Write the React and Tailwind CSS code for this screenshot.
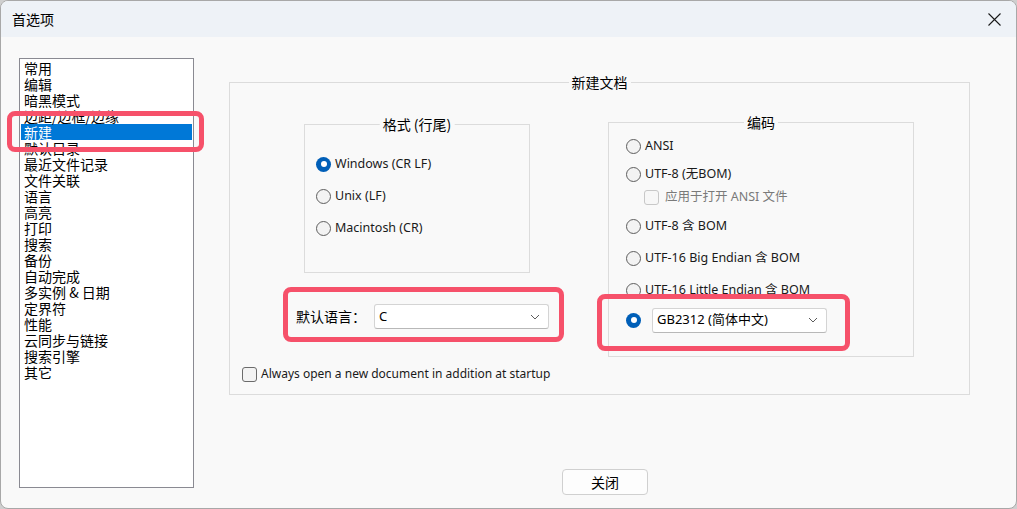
import React from 'react';

const cjk = { fontFamily: '"Noto Sans CJK SC", "Noto Sans", sans-serif' };
const ui = { fontFamily: '"Noto Sans", "Noto Sans CJK SC", sans-serif' };

const pages = [
  '常用', '编辑', '暗黑模式', '边距/边框/边缘', '新建', '默认目录', '最近文件记录', '文件关联', '语言', '高亮',
  '打印', '搜索', '备份', '自动完成', '多实例 & 日期', '定界符', '性能', '云同步与链接', '搜索引擎', '其它',
];

const Radio = ({ checked }) =>
  checked ? (
    <div className="w-[15px] h-[15px] rounded-full bg-[#005fb8] flex items-center justify-center shrink-0">
      <div className="w-[6px] h-[6px] rounded-full bg-white" />
    </div>
  ) : (
    <div className="w-[15px] h-[15px] rounded-full border border-[#5e5e5e] bg-[#f3f3f3] shrink-0" />
  );

const Check = ({ disabled }) => (
  <div
    className={`w-[15px] h-[15px] rounded-[3px] border shrink-0 ${
      disabled ? 'border-[#c8c8c8] bg-[#f7f7f7]' : 'border-[#6b6b6b] bg-[#f3f3f3]'
    }`}
  />
);

const Chevron = () => (
  <svg width="10" height="6" viewBox="0 0 10 6" className="shrink-0">
    <path d="M1 1 L5 5 L9 1" fill="none" stroke="#5c5c5c" strokeWidth="1" />
  </svg>
);

const Select = ({ value }) => (
  <div className="w-[175px] h-[25px] bg-white border border-[#d4d4d4] border-b-[#b8b8b8] rounded-[3px] flex items-center justify-between pl-[4px] pr-[8px] text-[13px] text-black" style={ui}>
    <span>{value}</span>
    <Chevron />
  </div>
);

const Row = ({ className = 'text-[12.5px]', children }) => (
  <div className={`h-[20px] flex items-center gap-[4px] text-[#1a1a1a] ${className}`} style={ui}>
    {children}
  </div>
);

const Group = ({ title, className = '', children }) => (
  <div className={`relative border border-[#dcdcdc] ${className}`}>
    <span className="absolute left-1/2 -translate-x-1/2 -top-[11px] bg-[#f9f9f9] px-[3px] text-[14px] leading-[20px] text-black whitespace-nowrap" style={cjk}>
      {title}
    </span>
    {children}
  </div>
);

export default function App() {
  return (
    <div className="relative w-[1017px] h-[509px] bg-[#cfcfcf] overflow-hidden">
      <div className="w-full h-full flex flex-col bg-[#f9f9f9] border border-[#a8a8a8] rounded-[8px] overflow-hidden">
        {/* title bar */}
        <div className="h-[36px] bg-[#eef2f7] flex items-center justify-between pl-[11px] pr-[15px] shrink-0">
          <span className="text-[14px] text-black" style={cjk}>首选项</span>
          <svg width="13" height="13" viewBox="0 0 13 13">
            <path d="M0.5 0.5 L12.5 12.5 M12.5 0.5 L0.5 12.5" stroke="#1a1a1a" strokeWidth="1.1" />
          </svg>
        </div>

        {/* body */}
        <div className="flex-1 flex pl-[18px]">
          {/* page list */}
          <div className="mt-[21px] w-[175px] h-[430px] bg-white border border-[#8a8a92] pt-[1px] px-[1px]">
            {pages.map((p) => (
              <div
                key={p}
                className={`h-[16px] leading-[16px] pl-[3px] text-[14px] whitespace-nowrap ${
                  p === '新建' ? 'bg-[#0078d7] text-white' : 'text-black'
                }`}
                style={cjk}
              >
                {p}
              </div>
            ))}
          </div>

          {/* right panel */}
          <div className="ml-[35px] flex flex-col">
            <Group title="新建文档" className="mt-[45px] w-[741px] h-[313px]">
              <div className="flex items-start pt-[39px] pl-[74px]">
                {/* left column */}
                <div className="w-[226px] mt-[2px] flex flex-col">
                  <Group title="格式 (行尾)" className="w-[226px] h-[149px]">
                    <div className="pt-[29px] pl-[11px] flex flex-col gap-[12px]">
                      <Row><Radio checked /><span>Windows (CR LF)</span></Row>
                      <Row><Radio /><span>Unix (LF)</span></Row>
                      <Row><Radio /><span>Macintosh (CR)</span></Row>
                    </div>
                  </Group>
                  <div className="mt-[31px] -ml-[8px] w-[260px] flex items-center gap-[8px]">
                    <span className="text-[14px] text-black whitespace-nowrap" style={cjk}>默认语言：</span>
                    <Select value="C" />
                  </div>
                </div>

                {/* right column */}
                <Group title="编码" className="ml-[78px] w-[306px] h-[235px]">
                  <div className="pt-[13px] pl-[17px] flex flex-col">
                    <Row><Radio /><span>ANSI</span></Row>
                    <Row className="mt-[8px] text-[12.5px]"><Radio /><span>UTF-8 (无BOM)</span></Row>
                    <Row className="mt-[3px] pl-[18px] text-[12.5px]">
                      <Check disabled />
                      <span className="ml-[2px] text-[#7a7a7a]">应用于打开 ANSI 文件</span>
                    </Row>
                    <Row className="mt-[9px] text-[12.5px]"><Radio /><span>UTF-8 含 BOM</span></Row>
                    <Row className="mt-[12px] text-[12.5px]"><Radio /><span>UTF-16 Big Endian 含 BOM</span></Row>
                    <Row className="mt-[12px] text-[12.5px]"><Radio /><span>UTF-16 Little Endian 含 BOM</span></Row>
                    <div className="mt-[8px] h-[24px] flex items-center gap-[11px]">
                      <Radio checked />
                      <Select value="GB2312 (简体中文)" />
                    </div>
                  </div>
                </Group>
              </div>

              <div className="absolute left-[12px] top-[281px]">
                <Row className="text-[12px]"><Check /><span>Always open a new document in addition at startup</span></Row>
              </div>
            </Group>

            <div className="mt-[74px] ml-[333px] w-[86px] h-[26px] bg-[#fdfdfd] border border-[#d0d0d0] rounded-[4px] flex items-center justify-center text-[14px] text-black" style={cjk}>
              关闭
            </div>
          </div>
        </div>
      </div>

      {/* annotation highlights */}
      <div className="absolute left-[7px] top-[111px] w-[197px] h-[41px] border-[5px] border-[#f6516a] rounded-[8px]" />
      <div className="absolute left-[283px] top-[287px] w-[281px] h-[55px] border-[5px] border-[#f6516a] rounded-[8px]" />
      <div className="absolute left-[597px] top-[294px] w-[253px] h-[57px] border-[5px] border-[#f6516a] rounded-[8px]" />
    </div>
  );
}
